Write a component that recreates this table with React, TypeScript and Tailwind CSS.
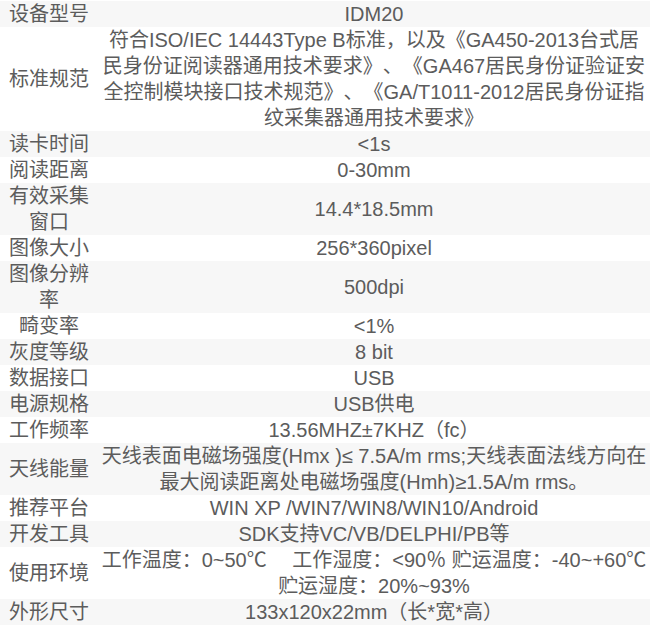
import React from "react";

interface SpecRow {
  label: React.ReactNode;
  value: React.ReactNode;
}

const rows: SpecRow[] = [
  { label: "设备型号", value: "IDM20" },
  {
    label: "标准规范",
    value: (
      <>
        符合ISO/IEC 14443Type B标准，以及《GA450-2013台式居
        <br />
        民身份证阅读器通用技术要求》、《GA467居民身份证验证安
        <br />
        全控制模块接口技术规范》、《GA/T1011-2012居民身份证指
        <br />
        纹采集器通用技术要求》
      </>
    ),
  },
  { label: "读卡时间", value: "<1s" },
  { label: "阅读距离", value: "0-30mm" },
  {
    label: (
      <>
        有效采集
        <br />
        窗口
      </>
    ),
    value: "14.4*18.5mm",
  },
  { label: "图像大小", value: "256*360pixel" },
  {
    label: (
      <>
        图像分辨
        <br />率
      </>
    ),
    value: "500dpi",
  },
  { label: "畸变率", value: "<1%" },
  { label: "灰度等级", value: "8 bit" },
  { label: "数据接口", value: "USB" },
  { label: "电源规格", value: "USB供电" },
  { label: "工作频率", value: "13.56MHZ±7KHZ（fc）" },
  {
    label: "天线能量",
    value: (
      <>
        天线表面电磁场强度(Hmx )≤ 7.5A/m rms;天线表面法线方向在
        <br />
        最大阅读距离处电磁场强度(Hmh)≥1.5A/m rms。
      </>
    ),
  },
  { label: "推荐平台", value: "WIN XP /WIN7/WIN8/WIN10/Android" },
  { label: "开发工具", value: "SDK支持VC/VB/DELPHI/PB等" },
  {
    label: "使用环境",
    value: (
      <>
        工作温度：0~50℃{"\u3000 "}工作湿度：&lt;90％ 贮运温度：-40~+60℃
        <br />
        贮运湿度：20%~93%
      </>
    ),
  },
  { label: "外形尺寸", value: "133x120x22mm（长*宽*高）" },
];

export default function App() {
  return (
    <div
      className="w-[650px] bg-white pt-px text-[20px] leading-[26px] text-[#5c5c5c] [text-spacing-trim:space-all]"
      style={{ fontFamily: '"Liberation Sans", "Noto Sans CJK SC", sans-serif' }}
    >
      {rows.map((row, i) => (
        <div key={i} className={`flex ${i % 2 === 0 ? "bg-[#f7f7f7]" : "bg-white"}`}>
          <div className="flex w-[98px] shrink-0 items-center justify-center text-center">
            <span>{row.label}</span>
          </div>
          <div className="flex flex-1 items-center justify-center px-px text-center">
            <span>{row.value}</span>
          </div>
        </div>
      ))}
    </div>
  );
}
